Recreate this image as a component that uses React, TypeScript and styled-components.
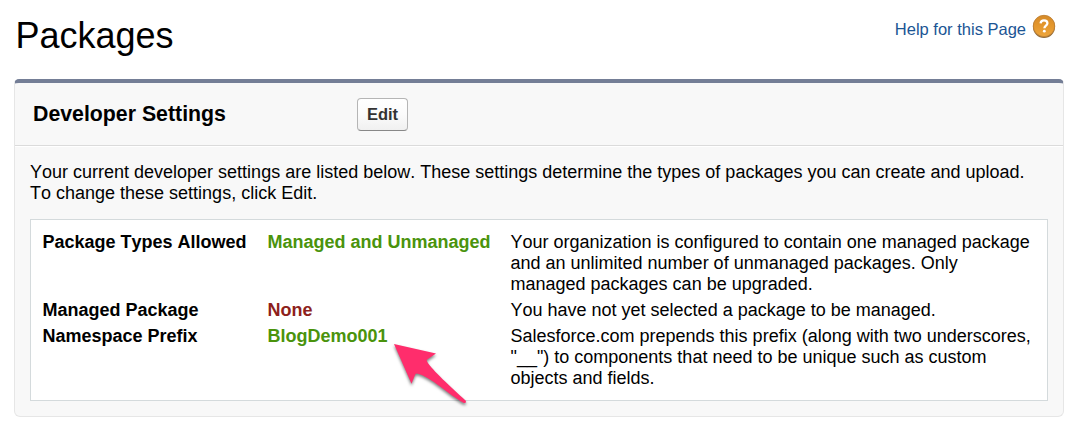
import React from "react";
import styled, { createGlobalStyle } from "styled-components";

const GlobalStyle = createGlobalStyle`
  * { box-sizing: border-box; }
  body {
    margin: 0;
    background: #fff;
    color: #000;
    font-family: "Liberation Sans", Arial, Helvetica, sans-serif;
    font-size: 18px;
    line-height: 21px;
    font-kerning: none;
  }
`;

const Page = styled.main`
  width: 1079px;
  height: 430px;
  padding: 14px 15px 0 14px;
  overflow: hidden;
`;

const PageHeader = styled.header`
  display: flex;
  justify-content: space-between;
  align-items: flex-start;
  height: 65px;
  padding: 0 8px 0 1.5px;
`;

const Title = styled.h1`
  margin: 0;
  font-size: 36px;
  font-weight: 400;
  line-height: 44px;
`;

const HelpLink = styled.a`
  display: flex;
  gap: 6px;
  color: #1b5594;
  font-size: 16.5px;
  line-height: 20px;
  text-decoration: none;
  white-space: nowrap;
`;

const HelpText = styled.span`
  padding-top: 5px;
`;

const Panel = styled.section`
  width: 1050px;
  height: 338px;
  border: 1px solid #e6e6e6;
  border-top: 4px solid #747e96;
  border-radius: 5px 5px 6px 6px;
  background: #f8f8f8;
`;

const PanelHeader = styled.div`
  display: flex;
  align-items: flex-start;
  height: 63px;
  padding: 15px 0 0 18px;
  border-bottom: 1px solid #dbdbdb;
`;

const PanelTitle = styled.h2`
  width: 324px;
  margin: 4px 0 0;
  font-size: 21.3px;
  line-height: 25px;
`;

const EditButton = styled.button`
  width: 51px;
  height: 33px;
  padding: 0 0 1px;
  border: 1px solid #b5b5b5;
  border-bottom-color: #888;
  border-radius: 4px;
  background: linear-gradient(#fff, #fbfbfb 50%, #f0f0f0);
  color: #333;
  font: bold 16.5px "Liberation Sans", Arial, sans-serif;
`;

const PanelBody = styled.div`
  padding: 15px 15px 0;
  border-top: 1px solid #fff;
`;

const Intro = styled.p`
  margin: 0;
  white-space: nowrap;
`;

const Settings = styled.dl`
  position: relative;
  display: grid;
  grid-template-columns: 225px 243px 530px;
  row-gap: 5px;
  align-content: start;
  width: 1018px;
  height: 182px;
  margin: 15px 0 0;
  padding: 12px 0 0 11.5px;
  border: 1px solid #d4dadc;
  background: #fff;
`;

const Label = styled.dt`
  font-weight: 700;
`;

const Value = styled.dd<{ $tone: string }>`
  margin: 0;
  color: ${(p) => p.$tone};
  font-weight: 700;
`;

const Description = styled.dd`
  margin: 0;
  white-space: nowrap;
`;

const Arrow = styled.svg`
  position: absolute;
  left: 359px;
  top: 120px;
  overflow: visible;
  filter: drop-shadow(0 2px 1.5px rgba(0, 0, 0, 0.5));
`;

const rows = [
  {
    label: "Package Types Allowed",
    value: "Managed and Unmanaged",
    tone: "#4a930c",
    lines: [
      "Your organization is configured to contain one managed package",
      "and an unlimited number of unmanaged packages. Only",
      "managed packages can be upgraded.",
    ],
  },
  {
    label: "Managed Package",
    value: "None",
    tone: "#8e1f1c",
    lines: ["You have not yet selected a package to be managed."],
  },
  {
    label: "Namespace Prefix",
    value: "BlogDemo001",
    tone: "#4a930c",
    lines: [
      "Salesforce.com prepends this prefix (along with two underscores,",
      '"__") to components that need to be unique such as custom',
      "objects and fields.",
    ],
  },
];

const Lines = ({ lines }: { lines: string[] }) => (
  <>
    {lines.map((line, i) => (
      <React.Fragment key={line}>
        {i > 0 && <br />}
        {line}
      </React.Fragment>
    ))}
  </>
);

const HelpIcon = () => (
  <svg width="24" height="25" viewBox="0 0 24 25">
    <defs>
      <linearGradient id="amber" x1="0" y1="0" x2="0" y2="1">
        <stop offset="0" stopColor="#d58a28" />
        <stop offset="0.45" stopColor="#e3962c" />
        <stop offset="1" stopColor="#eda53c" />
      </linearGradient>
    </defs>
    <circle cx="12" cy="12.8" r="11.1" fill="#8f6a38" />
    <circle cx="12" cy="12" r="10.7" fill="url(#amber)" stroke="#c28236" strokeWidth="0.9" />
    <path
      d="M8.6 9.3C8.8 7.3 10.2 6.4 12 6.4c2 0 3.4 1.1 3.4 2.9 0 2.4-3 2.5-3 5"
      fill="none"
      stroke="#fff"
      strokeWidth="2.3"
    />
    <circle cx="12.3" cy="17.2" r="1.4" fill="#fff" />
  </svg>
);

export default function App() {
  return (
    <>
      <GlobalStyle />
      <Page>
        <PageHeader>
          <Title>Packages</Title>
          <HelpLink>
            <HelpText>Help for this Page</HelpText>
            <HelpIcon />
          </HelpLink>
        </PageHeader>
        <Panel>
          <PanelHeader>
            <PanelTitle>Developer Settings</PanelTitle>
            <EditButton>Edit</EditButton>
          </PanelHeader>
          <PanelBody>
            <Intro>
              <Lines
                lines={[
                  "Your current developer settings are listed below. These settings determine the types of packages you can create and upload.",
                  "To change these settings, click Edit.",
                ]}
              />
            </Intro>
            <Settings>
              {rows.map((row) => (
                <React.Fragment key={row.label}>
                  <Label>{row.label}</Label>
                  <Value $tone={row.tone}>{row.value}</Value>
                  <Description>
                    <Lines lines={row.lines} />
                  </Description>
                </React.Fragment>
              ))}
              <Arrow width="80" height="66" viewBox="390 340 80 66">
                <path
                  d="M394 344L436 353.4L427.5 359.3Q426.3 360.2 427.2 361.8C432 370 451 387 465.8 400.7Q466.5 403.5 463.8 403C448 394 431 377 417.8 373.7Q415.6 373.3 415 375L411.5 383.8Z"
                  fill="#ff2d6c"
                />
              </Arrow>
            </Settings>
          </PanelBody>
        </Panel>
      </Page>
    </>
  );
}
